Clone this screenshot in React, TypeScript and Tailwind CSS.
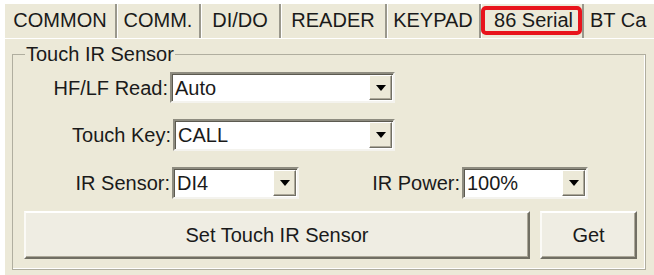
const tabs = [
  { label: 'COMMON', w: 'w-[112px]' },
  { label: 'COMM.', w: 'w-[84px]' },
  { label: 'DI/DO', w: 'w-[80px]' },
  { label: 'READER', w: 'w-[106px]' },
  { label: 'KEYPAD', w: 'w-[94px]' },
];

function Combo({ value, className }: { value: string; className: string }) {
  return (
    <div
      className={`flex items-stretch border-2 border-t-[#8e8c80] border-l-[#8e8c80] border-r-[#f4f3ee] border-b-[#f4f3ee] bg-white shadow-[inset_1px_1px_0_#5c5a50] ${className}`}
    >
      <div className="flex flex-1 items-center pl-[3px] leading-none">{value}</div>
      {/* drop button */}
      <div className="my-[1px] mr-[1px] flex w-[23px] items-center justify-center border border-t-white border-l-white border-r-[#716f64] border-b-[#716f64] bg-[#ece9d8] shadow-[inset_-1px_-1px_0_#aca899]">
        <svg width="10" height="6" viewBox="0 0 10 6">
          <path d="M0 0h10L5 6z" fill="#000" />
        </svg>
      </div>
    </div>
  );
}

function Button({ children, className }: { children: string; className: string }) {
  return (
    <div
      className={`flex items-center justify-center border-2 border-t-white border-l-[#fbfaf6] border-r-[#716f64] border-b-[#716f64] bg-[#efede3] shadow-[inset_-1px_-1px_0_#aca899] ${className}`}
    >
      {children}
    </div>
  );
}

export default function App() {
  return (
    <div className="h-[275px] w-[654px] overflow-hidden bg-white pl-[5px] pt-[4px] font-['Liberation_Sans',Arial,sans-serif] text-[20px] text-[#1a1a1a]">
      <div className="h-full bg-[#ece9d8]">
        {/* tab strip */}
        <div className="flex h-[34px] items-stretch whitespace-nowrap">
          {tabs.map((t) => (
            <div
              key={t.label}
              className={`flex shrink-0 items-center justify-center border-r-2 border-r-[#9a988c] pb-[3px] shadow-[1px_0_0_#fff] ${t.w}`}
            >
              {t.label}
            </div>
          ))}
          <div className="flex w-[103px] shrink-0 items-center border-r-2 border-r-[#9a988c] pt-[2px] pb-[3px]">
            <div className="flex h-[29px] w-[101px] items-center justify-center rounded-[5px] border-4 border-[#e8141c] pb-[2px] pl-[4px]">
              86 Serial
            </div>
          </div>
          <div className="flex items-center pb-[3px] pl-[6px]">BT Ca</div>
        </div>

        <div className="h-px bg-white" />

        {/* panel */}
        <div className="pl-[7px] pt-[5px]">
          <fieldset className="h-[226px] w-[634px] border border-[#b0ae9f] px-0 pb-0 shadow-[inset_-1px_-1px_0_#fff]">
            <legend className="ml-[12px] px-[1px] leading-[20px]">Touch IR Sensor</legend>

            <div className="mt-[8px] flex h-[31px] items-center">
              <div className="w-[155px] text-right">HF/LF Read:</div>
              <Combo value="Auto" className="ml-[2px] h-[31px] w-[225px]" />
            </div>

            <div className="mt-[16px] flex h-[32px] items-center">
              <div className="w-[158px] text-right">Touch Key:</div>
              <Combo value="CALL" className="ml-[2px] h-[32px] w-[222px]" />
            </div>

            <div className="mt-[16px] flex h-[32px] items-center">
              <div className="w-[157px] text-right">IR Sensor:</div>
              <Combo value="DI4" className="ml-[2px] h-[32px] w-[127px]" />
              <div className="w-[161px] text-right">IR Power:</div>
              <Combo value="100%" className="ml-[2px] h-[32px] w-[126px]" />
            </div>

            <div className="mt-[12px] flex h-[48px] gap-[10px] pl-[11px]">
              <Button className="w-[506px]">Set Touch IR Sensor</Button>
              <Button className="w-[97px]">Get</Button>
            </div>
          </fieldset>
        </div>
      </div>
    </div>
  );
}
